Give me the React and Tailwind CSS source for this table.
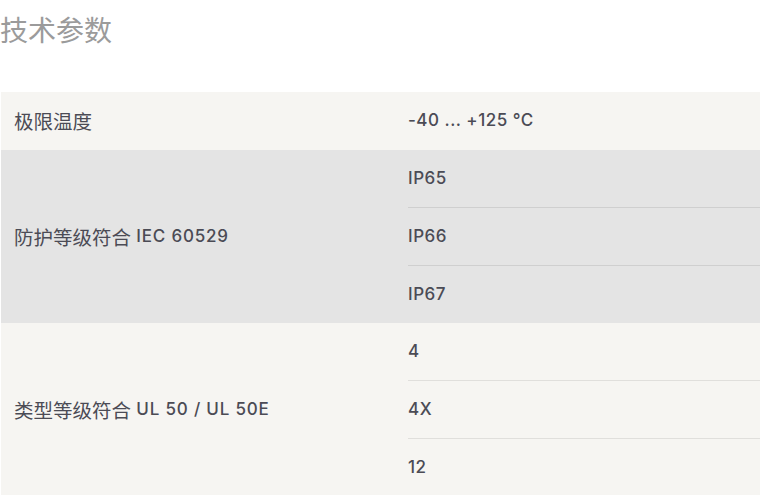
import React from 'react';

const rows = [
  { label: '极限温度', code: '', values: ['-40 ... +125 °C'], bg: 'bg-[#f6f5f2]', line: 'border-[#e2e1de]' },
  { label: '防护等级符合', code: 'IEC 60529', values: ['IP65', 'IP66', 'IP67'], bg: 'bg-[#e4e4e4]', line: 'border-[#cfcfcf]' },
  { label: '类型等级符合', code: 'UL 50 / UL 50E', values: ['4', '4X', '12'], bg: 'bg-[#f6f5f2]', line: 'border-[#e0dfdc]' },
];

const App = () => {
  return (
    <div
      className="w-[760px] h-[495px] overflow-hidden bg-white"
      style={{ fontFamily: 'Inter, "Noto Sans CJK SC", sans-serif' }}
    >
      {/* Heading */}
      <h2
        className="h-[92px] pt-[9px] text-[28px] leading-[40px] text-[#9b9b9b] font-normal"
        style={{ fontFamily: '"Noto Sans CJK SC", sans-serif' }}
      >
        技术参数
      </h2>

      {/* Spec table */}
      <div className="ml-px flex flex-col text-[17px] font-medium tracking-[0.5px] text-[#4b4b55]">
        {rows.map((row) => (
          <div key={row.label} className={`flex ${row.bg}`}>
            <div className="w-[407px] flex items-center pl-[13px] whitespace-pre">
              <span
                className="text-[19.5px] font-normal tracking-normal"
                style={{ fontFamily: '"Noto Sans CJK SC", sans-serif' }}
              >
                {row.label}
              </span>
              {row.code && <span className="tracking-[0.8px]"> {row.code}</span>}
            </div>
            <div className="flex-1 flex flex-col">
              {row.values.map((v, i) => (
                <div
                  key={v}
                  className={`flex items-center ${
                    row.values.length === 1 ? 'h-[58px]' : i === 0 ? 'h-[57px]' : 'h-[58px] pt-px'
                  } ${i > 0 ? `border-t ${row.line}` : ''}`}
                >
                  {v}
                </div>
              ))}
            </div>
          </div>
        ))}
      </div>
    </div>
  );
};

export default App;
